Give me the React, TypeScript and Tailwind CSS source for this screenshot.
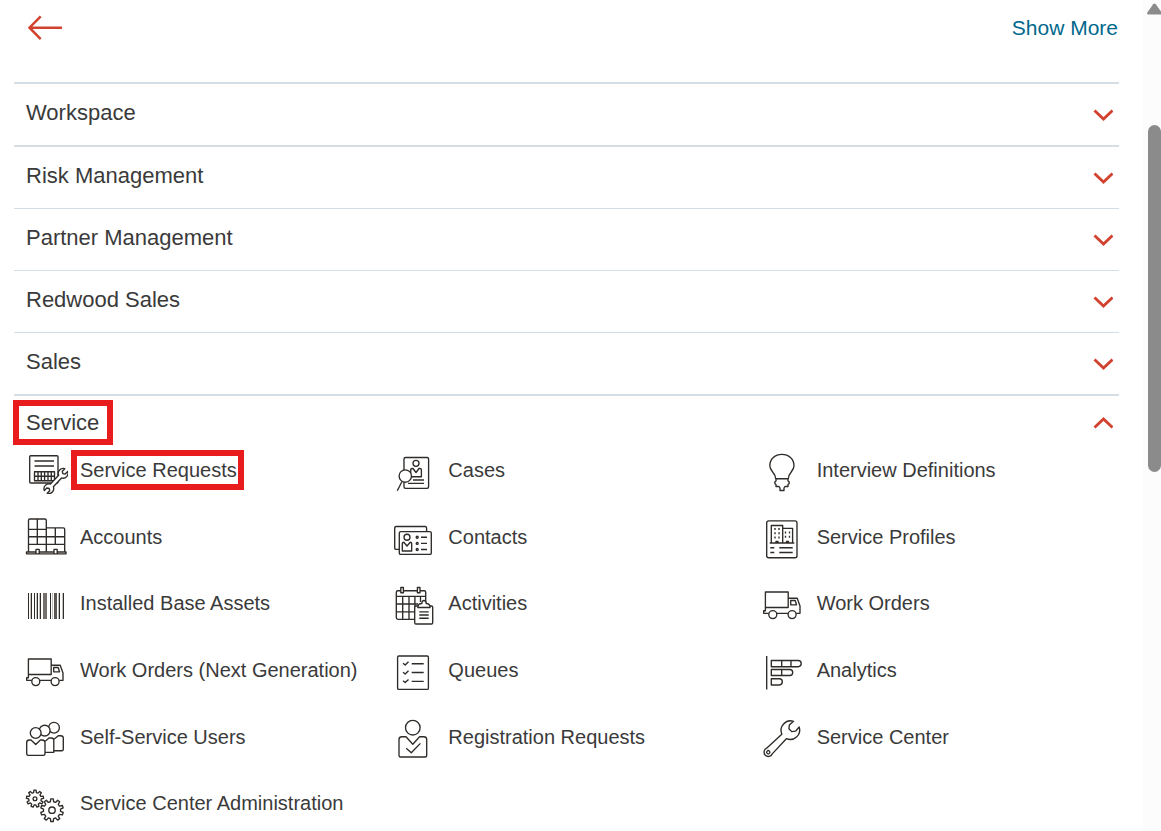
import React, { useState } from "react";

type IconName =
  | "requests" | "cases" | "bulb" | "accounts" | "contacts" | "profiles"
  | "barcode" | "activities" | "truck" | "queues" | "analytics"
  | "users" | "registration" | "wrench" | "gears";

function gearPath(cx: number, cy: number, outer: number, inner: number, teeth: number) {
  const pts: string[] = [];
  const step = (Math.PI * 2) / teeth;
  const shape: [number, number][] = [[-0.3, inner], [-0.18, outer], [0.18, outer], [0.3, inner]];
  for (let i = 0; i < teeth; i++) {
    for (const [f, r] of shape) {
      const a = (i + f) * step - Math.PI / 2;
      pts.push(`${(cx + r * Math.cos(a)).toFixed(2)},${(cy + r * Math.sin(a)).toFixed(2)}`);
    }
  }
  return `M${pts.join("L")}Z`;
}

const BARS: [number, number, string][] = [
  [4, 1, "#2f2b28"], [6, 1, "#c4c2c0"], [7, 1, "#2f2b28"], [10, 1, "#2f2b28"],
  [12, 1, "#c4c2c0"], [13, 1, "#2f2b28"], [15, 1, "#c4c2c0"], [16, 1, "#2f2b28"], [19, 4, "#75706c"],
  [26, 1, "#2f2b28"], [28, 1, "#c4c2c0"], [30, 3, "#5c5753"], [34, 1, "#c4c2c0"],
  [35, 1, "#2f2b28"], [38, 1, "#c4c2c0"], [39, 1, "#2f2b28"],
];

const drawings: Record<IconName, React.ReactNode> = {
  requests: (
    <>
      <rect x="5.7" y="5.7" width="28.3" height="27.3" rx="1" />
      <path d="M10.5 11H30M10.5 16H30M10.5 21.7H30.5V30.7H10.5ZM10.5 26.2H30.5M14 21.7V30.7M17.3 21.7V30.7M20.6 21.7V30.7M24 21.7V30.7M27.3 21.7V30.7" />
      <path transform="translate(32 31) rotate(43)" fill="#fff" d="M-2-6A5 5 0 0 1-2-15V-11.4L0-10L2-11.4V-15A5 5 0 0 1 2-6V6A5 5 0 0 1 2 15V11.4L0 10L-2 11.4V15A5 5 0 0 1-2 6Z" />
    </>
  ),
  cases: (
    <>
      <rect x="12" y="7.5" width="24.6" height="30.8" rx="1.5" />
      <circle cx="24" cy="13.3" r="3" />
      <path d="M18.7 26.7V20Q18.7 18.5 20.2 18.5H21L24 22.5L27 18.5H28Q29.4 18.5 29.4 20V26.7ZM21 30H32M16 33.3H32" />
      <circle cx="13.3" cy="26" r="6.2" fill="#fff" />
      <path d="M10 31.5L5.3 40.7" />
    </>
  ),
  bulb: (
    <path d="M14.7 28.7C14.7 22.5 8.8 21.5 8.8 15.8C8.8 9 14.2 4.4 20.9 4.4S33 9 33 15.8C33 21.5 27.3 22.5 27.3 28.7ZM15 28.7V31L13.8 32V33.5L15 34.5V36.5H18L19 38V40.5H23V38L24 36.5H27V34.5L28.2 33.5V32L27 31V28.7" />
  ),
  accounts: (
    <path d="M4.5 34.8V3.5Q4.5 2 6 2H20.8Q22.3 2 22.3 3.5V34.8M22.3 10.8H39.2Q40.7 10.8 40.7 12.3V34.8M13.3 2V27.5M31.3 10.8V27.5M4.5 12.3H22.3M4.5 19.7H40.7M4.5 27.3H40.7M2.5 36.8V35H12V32.4H15.2V36.8ZM12 35V36.8M15.2 35H30V32.4H33.2V35H42V36.8H15.2M30 35V36.8M33.2 35V36.8" />
  ),
  contacts: (
    <>
      <path d="M7.3 32.4H4.2Q2.7 32.4 2.7 30.9V11Q2.7 9.5 4.2 9.5H33Q34.6 9.5 34.6 11V14.6" />
      <rect x="7.3" y="14.6" width="32" height="22.8" rx="1.5" />
      <circle cx="15" cy="20.2" r="3" />
      <path d="M10.3 34V26.5Q10.3 25.2 11.8 25.2L15 29L18.2 25.2Q19.7 25.2 19.7 26.5V34ZM29 20.2H35M29 26.4H35M29 32.5H35" />
      <circle cx="25.2" cy="20.2" r="1" /><circle cx="25.2" cy="26.4" r="1" /><circle cx="25.2" cy="32.5" r="1" />
    </>
  ),
  profiles: (
    <>
      <rect x="5.7" y="3.9" width="30.3" height="36.8" rx="2" />
      <path d="M10.3 26V8.5H21.7V26M21.7 11.4H31.6V26M8.7 26H33.3M9.3 30.7H13.3M18.3 30.7H31.7M9.3 35.5H13.3M18.3 35.5H31.7M15 24.5H17V26H15ZM25.5 24.5H27.5V26H25.5Z" />
      <path strokeDasharray="2 2.2" d="M14 11V23M18 11V23M24.5 14.5V23M28.5 14.5V23" />
    </>
  ),
  barcode: (
    <g stroke="none">
      {BARS.map(([x, w, c]) => <rect key={x} x={x} y="10" width={w} height="26" fill={c} />)}
    </g>
  ),
  activities: (
    <>
      <path d="M22.7 36.3H6Q4.3 36.3 4.3 34.6V9.2Q4.3 7.7 5.8 7.7H32.2Q33.7 7.7 33.7 9.2V20M4.3 13.3H33.7M4.3 21H26M4.3 28.8H22.7M10.7 13.3V36.3M17 13.3V36.3M22.9 13.3V36.3M28.5 13.3V19" />
      <path fill="#fff" d="M8.8 4.5H11.4V9.7H8.8ZM25.4 4.5H28V9.7H25.4Z" />
      <rect x="22.7" y="23" width="18" height="18" rx="1.3" fill="#fff" />
      <path fill="#fff" d="M25.8 24.5Q25.8 20.5 29.8 20.5Q30 17.5 32 17.5T34.2 20.5Q38 20.5 38 24.5Z" />
      <path d="M27.3 28.8H36.7M27.3 32H36.7M27.3 35.2H36.7" />
    </>
  ),
  truck: (
    <>
      <path d="M4.4 9H27.2V24.5H4.4ZM27.2 15.2H36.2L39 23V30.3H35.2M27 30.3H15.8M7.8 30.3H2.7V27.7H4.4V24.5M29.7 17.5H34.2L35.5 21.8H29.7Z" />
      <circle cx="11.8" cy="31.6" r="4" /><circle cx="31.1" cy="31.6" r="4" />
    </>
  ),
  queues: (
    <>
      <rect x="5.6" y="6" width="30.8" height="33.4" rx="1.2" />
      <path d="M11 13.2L13.2 15L16.5 11.8M11 22.2L13.2 24L16.5 20.8M11 30.8L13.2 32.6L16.5 29.4M19.7 13.7H31.7M19.7 22.5H31.7M19.7 31.3H31.7" />
    </>
  ),
  analytics: (
    <path d="M5.7 6V39.4M10.3 10.5H37.2Q40.2 10.5 40.2 13.6T37.2 16.7H10.3ZM20.7 10.5V16.7M30 10.5V16.7M10.3 19.5H28.8Q31.7 19.5 31.7 22.5T28.8 25.5H10.3ZM20.7 19.5V25.5M10.3 28.7H18.4Q21.3 28.7 21.3 31.8T18.4 35H10.3Z" />
  ),
  users: (
    <>
      <circle cx="30" cy="10.7" r="5.4" fill="#fff" />
      <circle cx="20.7" cy="13.6" r="5.4" fill="#fff" />
      <circle cx="11.7" cy="16" r="5.4" fill="#fff" />
      <path d="M2.7 36.8V25.5Q2.7 23 5.5 23H7L11.7 27.5L16.4 23H18Q21 23 21 25.5V36.8Q21 38.3 19.5 38.3H4.2Q2.7 38.3 2.7 36.8ZM21 35.3H29.8V23.5Q29.8 21 27.5 21H25L21.5 24M29.8 33.7H37.8Q39.3 33.7 39.3 32.2V21.2Q39.3 18.7 36.8 18.7H34.3L30.3 22" />
    </>
  ),
  registration: (
    <>
      <circle cx="20.8" cy="10.7" r="7.3" />
      <path d="M7 38.5V22.5Q7 19.7 10 19.7H14L20.8 27.3L27.6 19.7H31.7Q34.7 19.7 34.7 22.5V38.5Q34.7 40 33.2 40H8.5Q7 40 7 38.5ZM14.2 31.2L19.3 35.7L28.4 26.4" />
    </>
  ),
  wrench: (
    <g transform="translate(29.3 13.2) rotate(45)">
      <path d="M-3.2 8.8A9.6 9.6 0 0 1-4-8.6L-4.4-3L-2 0H2L4.4-3L4-8.6A9.6 9.6 0 0 1 3.2 8.8L4 29.5A4.3 4.3 0 1 1-4 29.5Z" />
      <circle cx="0" cy="31.2" r="1.6" />
    </g>
  ),
  gears: (
    <>
      <path d={gearPath(11, 15.7, 8.6, 6.3, 9)} />
      <circle cx="11" cy="15.7" r="1.9" />
      <path fill="#fff" d={gearPath(28, 27.2, 11.4, 8.6, 10)} />
      <circle cx="28" cy="27.2" r="3.2" />
    </>
  ),
};

function Icon({ name }: { name: IconName }) {
  return (
    <svg viewBox="0 0 44 44" className="h-11 w-11 shrink-0" fill="none" stroke="#2f2b28" strokeWidth="1.35" strokeLinejoin="round" aria-hidden="true">
      {drawings[name]}
    </svg>
  );
}

const sections = [
  { label: "Workspace", line: "border-t-2" },
  { label: "Risk Management", line: "border-t-2" },
  { label: "Partner Management", line: "border-t" },
  { label: "Redwood Sales", line: "border-t" },
  { label: "Sales", line: "border-t" },
];

const items: { label: string; icon: IconName; marked?: boolean }[] = [
  { label: "Service Requests", icon: "requests", marked: true },
  { label: "Cases", icon: "cases" },
  { label: "Interview Definitions", icon: "bulb" },
  { label: "Accounts", icon: "accounts" },
  { label: "Contacts", icon: "contacts" },
  { label: "Service Profiles", icon: "profiles" },
  { label: "Installed Base Assets", icon: "barcode" },
  { label: "Activities", icon: "activities" },
  { label: "Work Orders", icon: "truck" },
  { label: "Work Orders (Next Generation)", icon: "truck" },
  { label: "Queues", icon: "queues" },
  { label: "Analytics", icon: "analytics" },
  { label: "Self-Service Users", icon: "users" },
  { label: "Registration Requests", icon: "registration" },
  { label: "Service Center", icon: "wrench" },
  { label: "Service Center Administration", icon: "gears" },
];

function Chevron({ up = false }: { up?: boolean }) {
  return (
    <svg viewBox="0 0 20 12" className="h-3 w-5" fill="none" stroke="#d1432f" strokeWidth="2.9" aria-hidden="true">
      <path d={up ? "M1.5 10.5L10.5 2L19.5 10.5" : "M1.5 1.5L10.5 10L19.5 1.5"} />
    </svg>
  );
}

export default function App() {
  const [open, setOpen] = useState(true);
  return (
    <div className="flex h-screen overflow-hidden bg-white font-['Liberation_Sans',Arial,sans-serif] text-[#3a3a3a]">
      <main className="min-w-0 flex-1 overflow-hidden pl-3.5 pr-6">
        <header className="flex h-[82px] items-start justify-between pl-3.5 pr-px pt-3">
          <button type="button" aria-label="Back" className="pt-0.5">
            <svg viewBox="0 0 34 28" className="h-7 w-[34px]" fill="none" stroke="#d1432f" strokeWidth="2.5" aria-hidden="true">
              <path d="M34 13.7H1.5M12.7 2.3L1.5 13.7L12.7 25.1" />
            </svg>
          </button>
          <a href="#more" className="text-[21px] leading-8 text-[#00688c]">Show More</a>
        </header>
        <nav aria-label="Navigator">
          {sections.map((s) => (
            <div key={s.label} className={`${s.line} border-[#d5dde5]`}>
              <button type="button" className="flex h-[61px] w-full items-center justify-between pb-1 pl-3 pr-1.5 text-[22px]">
                <span>{s.label}</span>
                <span className="pt-1"><Chevron /></span>
              </button>
            </div>
          ))}
          <section className="border-t-2 border-[#d5dde5]">
            <button type="button" aria-expanded={open} onClick={() => setOpen(!open)} className="flex h-[54px] w-full items-center justify-between pb-0.5 pl-3 pr-1.5 text-[22px]">
              <span className="relative">
                Service
                <span className="absolute -inset-y-1.5 -left-[13px] -right-3.5 border-6 border-[#e81c1c]" />
              </span>
              <span className="pt-0.5"><Chevron up /></span>
            </button>
            {open && (
              <ul className="grid h-[400px] grid-cols-3 grid-rows-6 text-xl">
                {items.map((it) => (
                  <li key={it.label} className="pl-2.5">
                    <a href="#item" className="flex items-start gap-3">
                      <Icon name={it.icon} />
                      <span className="relative mt-1.5 whitespace-nowrap leading-7">
                        {it.label}
                        {it.marked && <span className="absolute -inset-y-1.5 -left-[9px] -right-[7px] border-6 border-[#e81c1c]" />}
                      </span>
                    </a>
                  </li>
                ))}
              </ul>
            )}
          </section>
        </nav>
      </main>
      <aside aria-hidden="true" className="w-[18px] shrink-0 overflow-hidden bg-[#fcfcfc] pl-1">
        <svg viewBox="0 0 16 12" className="mt-[3px] h-3 w-4" fill="#8b8b8b">
          <path d="M6.2 1.2Q7.5 0 8.8 1.2L14.7 9.4Q15.3 11.5 13.5 11.5H1.5Q-.3 11.5 .3 9.4Z" />
        </svg>
        <div className="ml-px mt-[110px] h-[347px] w-[13px] rounded-full bg-[#8b8b8b]" />
      </aside>
    </div>
  );
}
